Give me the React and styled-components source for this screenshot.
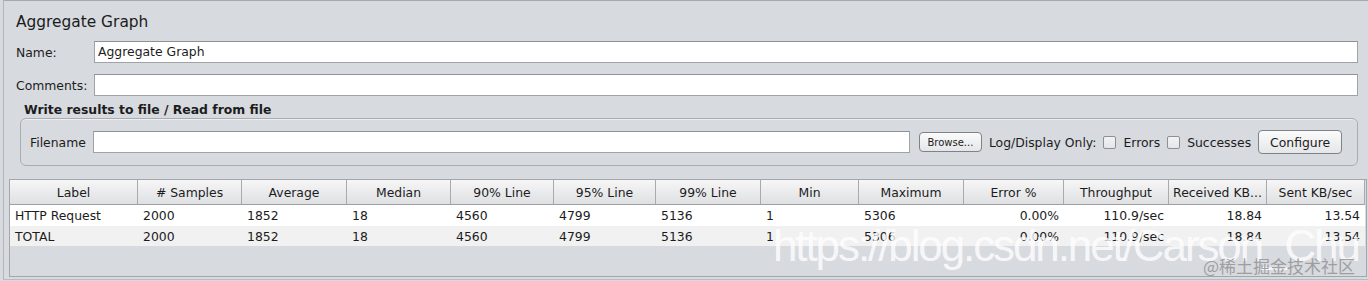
import React from 'react'
import styled, { createGlobalStyle } from 'styled-components'

const GlobalStyle = createGlobalStyle`
  html, body {
    margin: 0;
    padding: 0;
    background: #d7dadf;
  }
  body {
    font-family: "DejaVu Sans", "Liberation Sans", sans-serif;
    color: #1c1c1c;
  }
`

const Page = styled.div`
  position: relative;
  height: 278px;
  margin-left: 3px;
  border-top: 1px solid #a6a9ae;
  border-left: 1px solid #b3b6bb;
  border-bottom: 1px solid #b9bcc1;
  overflow: hidden;
`

const Title = styled.div`
  font-size: 15.4px;
  padding: 11px 0 0 12px;
  height: 39px;
  box-sizing: border-box;
  line-height: 20px;
`

const FormRow = styled.div`
  display: flex;
  align-items: center;
  padding: 0 10px 0 12px;
  margin-top: ${p => p.top || 0}px;
`

const Label = styled.div`
  width: 78px;
  font-size: 12.4px;
`

const TextInput = styled.div`
  flex: 1;
  height: 22px;
  box-sizing: border-box;
  background: #fff;
  border: 1px solid #9fa2a7;
  border-top-color: #8e9196;
  font-size: 12.4px;
  line-height: 20px;
  padding-left: 3px;
`

const SectionTitle = styled.div`
  font-weight: bold;
  font-size: 12.4px;
  padding: 6px 0 0 20px;
  line-height: 16px;
`

const FileBox = styled.div`
  margin: 0 10px 0 16px;
  height: 48px;
  box-sizing: border-box;
  border: 1px solid #a9acb1;
  border-radius: 6px;
  box-shadow: inset 0 1px 0 #eceef1;
  display: flex;
  align-items: center;
  padding: 0 11px 0 9px;
  gap: 7px;
  white-space: nowrap;
  & > * { flex-shrink: 0; }
`

const FileLabel = styled.span`
  font-size: 12.4px;
`

const FileInput = styled(TextInput)`
  flex: none;
  width: 817px;
  margin-right: 2px;
`

const Button = styled.div`
  height: ${p => (p.small ? 20 : 24)}px;
  width: ${p => p.w}px;
  box-sizing: border-box;
  border: 1px solid #7f8287;
  border-radius: 4px;
  background: linear-gradient(#fbfbfb, #e4e6e9);
  font-size: ${p => (p.small ? 10 : 12.4)}px;
  display: flex;
  align-items: center;
  justify-content: center;
`

const Text = styled.span`
  font-size: 12.4px;
`

const Check = styled.span`
  width: 13px;
  height: 13px;
  box-sizing: border-box;
  border: 1px solid #8c8f94;
  border-radius: 2px;
  background: linear-gradient(#f2f3f5, #e3e5e8);
`

const Table = styled.div`
  margin: 13px 1px 0 5px;
  height: 98px;
  box-sizing: border-box;
  border: 1px solid #a3a6ab;
`

const Grid = styled.div`
  display: grid;
  grid-template-columns: 128px 104px 105px 104px 103px 102px 105px 98px 105px 100px 105px 98px 98px;
`

const Head = styled.div`
  height: 25px;
  box-sizing: border-box;
  background: linear-gradient(#f6f6f7, #dfe0e2);
  border-right: 1px solid #a8aaae;
  border-bottom: 1px solid #9c9ea2;
  font-size: 12.4px;
  display: flex;
  align-items: center;
  justify-content: center;
  white-space: nowrap;
  &:last-child { border-right: none; }
`

const Cell = styled.div`
  height: ${p => (p.first ? 21 : 20)}px;
  background: ${p => (p.alt ? '#f1f1f2' : '#ffffff')};
  font-size: 12.4px;
  display: flex;
  align-items: center;
  justify-content: ${p => (p.right ? 'flex-end' : 'flex-start')};
  padding: ${p => (p.right ? '0 5px 0 0' : '0 0 0 5px')};
  white-space: nowrap;
`

const Mark = styled.div`
  position: absolute;
  left: 769px;
  top: 223px;
  font-family: "Liberation Sans", Arial, sans-serif;
  font-size: 44px;
  line-height: 1;
  color: rgba(255, 255, 255, 0.8);
  white-space: nowrap;
  letter-spacing: -2.1px;
  pointer-events: none;
`

const Badge = styled.div`
  position: absolute;
  left: 1199px;
  top: 252px;
  font-family: "Noto Sans CJK SC", sans-serif;
  font-size: 17px;
  color: rgba(150, 150, 152, 0.9);
  white-space: nowrap;
  pointer-events: none;
`

const headers = ['Label', '# Samples', 'Average', 'Median', '90% Line', '95% Line', '99% Line', 'Min', 'Maximum', 'Error %', 'Throughput', 'Received KB...', 'Sent KB/sec']

const rows = [
  ['HTTP Request', '2000', '1852', '18', '4560', '4799', '5136', '1', '5306', '0.00%', '110.9/sec', '18.84', '13.54'],
  ['TOTAL', '2000', '1852', '18', '4560', '4799', '5136', '1', '5306', '0.00%', '110.9/sec', '18.84', '13.54'],
]

const App = () => {
  return (
    <Page>
      <GlobalStyle />
      <Title>Aggregate Graph</Title>
      <FormRow top={1}>
        <Label>Name:</Label>
        <TextInput>Aggregate Graph</TextInput>
      </FormRow>
      <FormRow top={11}>
        <Label>Comments:</Label>
        <TextInput />
      </FormRow>
      <SectionTitle>Write results to file / Read from file</SectionTitle>
      <FileBox>
        <FileLabel>Filename</FileLabel>
        <FileInput />
        <Button small w={63}>Browse...</Button>
        <Text>Log/Display Only:</Text>
        <Check />
        <Text>Errors</Text>
        <Check />
        <Text>Successes</Text>
        <Button w={84}>Configure</Button>
      </FileBox>
      <Table>
        <Grid>
          {headers.map(h => <Head key={h}>{h}</Head>)}
          {rows.map((r, i) =>
            r.map((c, j) => (
              <Cell key={i + '-' + j} first={i === 0} alt={i === 1} right={j >= 9}>{c}</Cell>
            ))
          )}
        </Grid>
      </Table>
      <Mark>https://blog.csdn.net/Carson_Chu</Mark>
      <Badge>@稀土掘金技术社区</Badge>
    </Page>
  )
}

export default App
